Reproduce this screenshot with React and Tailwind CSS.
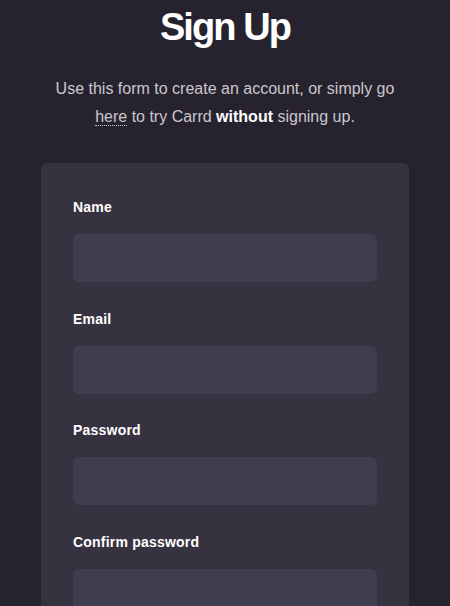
export default function App() {
  const fields = ['Name', 'Email', 'Password', 'Confirm password']

  return (
    <div className="min-h-[606px] bg-[#26232e] font-['Liberation_Sans',Arial,sans-serif] pt-[8px] overflow-hidden h-[606px]">
      <div className="w-[368px] mx-auto">
        <h1 className="text-center text-white font-bold text-[38px] leading-[38px] tracking-[-0.05em]">
          Sign Up
        </h1>
        <p className="mt-[29px] text-center text-[16px] leading-[28px] text-[#cbc7cf]">
          Use this form to create an account, or simply go{' '}
          <a className="border-b border-dotted border-[#cbc7cf]">here</a> to try Carrd{' '}
          <strong className="text-white font-bold">without</strong> signing up.
        </p>
        <div className="mt-[32px] bg-[#37323f] rounded-[6px] px-[32px] pt-[34px] pb-[32px]">
          {fields.map((f) => (
            <div key={f} className="mb-[26.5px]">
              <label className="block text-white font-bold text-[14px] leading-[20px] tracking-[0.015em] mb-[17px]">{f}</label>
              <input
                type={f.includes('assword') ? 'password' : 'text'}
                className="block w-full h-[48px] rounded-[6px] bg-[#423c4f] outline-none"
              />
            </div>
          ))}
        </div>
      </div>
    </div>
  )
}
